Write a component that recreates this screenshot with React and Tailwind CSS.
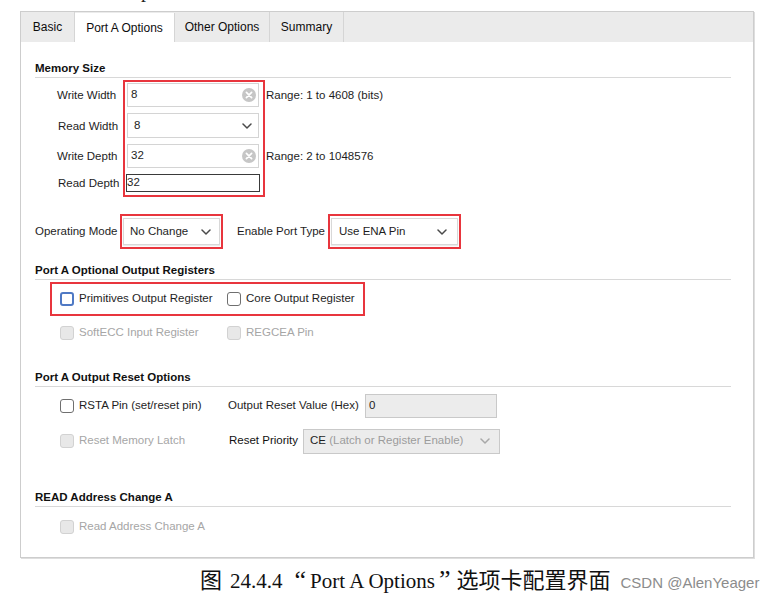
import React from 'react';

const CJK = "font-['Noto_Sans_CJK_SC',sans-serif]";
const SERIF = "font-['Liberation_Serif','Noto_Sans_CJK_SC',serif]";

function ClearIcon() {
    return (
        <svg width="14" height="14" viewBox="0 0 14 14">
            <circle cx="7" cy="7" r="7" fill="#c6c6c6" />
            <path d="M4.4 4.4l5.2 5.2M9.6 4.4l-5.2 5.2" stroke="#fff" strokeWidth="1.7" strokeLinecap="round" />
        </svg>
    );
}

function Chevron({ color = '#4a4a4a' }) {
    return (
        <svg width="10" height="6" viewBox="0 0 10 6">
            <path d="M1 1l4 4 4-4" fill="none" stroke={color} strokeWidth="1.5" strokeLinecap="round" strokeLinejoin="round" />
        </svg>
    );
}

function Checkbox({ variant = 'normal' }) {
    const styles = {
        normal: 'border border-[#6f6f6f] bg-white',
        focus: 'border-2 border-[#4f79c4] bg-white',
        disabled: 'border border-[#d2d2d2] bg-[#e8e8e8]',
    };
    return <span className={`inline-block w-[14px] h-[14px] rounded-[3px] shrink-0 ${styles[variant]}`} />;
}

function CheckItem({ label, variant = 'normal', width }) {
    const disabled = variant === 'disabled';
    return (
        <div className="flex items-center gap-[5px]" style={width ? { width } : undefined}>
            <Checkbox variant={variant} />
            <span className={disabled ? 'text-[#a6a6a6]' : 'text-[#1e1e1e]'}>{label}</span>
        </div>
    );
}

function SectionHeader({ children, className = '' }) {
    return (
        <div className={`h-[18px] border-b border-[#d8d8d8] font-bold text-[#111] leading-[16px] ${className}`}>
            {children}
        </div>
    );
}

function Tab({ label, active, width }) {
    return (
        <div
            className={`flex items-center justify-center border-r border-[#d5d5d5] text-[12px] text-[#0d0d0d] ${
                active ? 'h-[29px] bg-white' : 'h-full'
            }`}
            style={{ width }}
        >
            {label}
        </div>
    );
}

export default function App() {
    return (
        <div className="w-[778px] h-[598px] bg-white overflow-hidden font-['Liberation_Sans',Arial,sans-serif] text-[11.5px] text-[#1e1e1e]">
            {/* bottom edge of the previous paragraph, cut off by the crop */}
            <div className="h-[11px] overflow-hidden">
                <div className={`-mt-[22px] pl-[6px] text-[20px] leading-[22px] text-[#222] whitespace-nowrap ${SERIF}`}>
                    <span className={CJK}>我们将</span> Port A Options <span className={CJK}>选项卡配置如下图所示：</span>
                </div>
            </div>

            <div className="ml-[20px] w-[734px] h-[547px] border border-[#cdcdcd] shadow-[1px_1px_0_#dedede] flex flex-col">
                <div className="h-[30px] bg-[#ebebeb] flex items-end shrink-0">
                    <Tab label="Basic" width={54} />
                    <Tab label="Port A Options" width={100} active />
                    <Tab label="Other Options" width={95} />
                    <Tab label="Summary" width={74} />
                </div>

                <div className="pl-[14px] pr-[22px]">
                    <SectionHeader className="mt-[18px]">Memory Size</SectionHeader>

                    <div className="mt-[2px] flex">
                        <div className="w-[88px] pl-[22px] pt-[4px] flex flex-col gap-[6px]">
                            <div className="h-[24px] flex items-center">Write Width</div>
                            <div className="h-[25px] flex items-center pl-[1px]">Read Width</div>
                            <div className="h-[24px] flex items-center">Write Depth</div>
                            <div className="h-[18px] flex items-center pl-[1px]">Read Depth</div>
                        </div>

                        <div className="w-[142px] h-[117px] border-2 border-[#e8353d] pt-[1px] pl-[2px] flex flex-col gap-[6px]">
                            <div className="w-[132px] h-[24px] border border-[#d4d4d4] bg-white flex items-center justify-between pl-[3px] pr-[2px]">
                                <span>8</span>
                                <ClearIcon />
                            </div>
                            <div className="w-[132px] h-[25px] border border-[#d4d4d4] bg-white flex items-center justify-between pl-[6px] pr-[6px]">
                                <span>8</span>
                                <Chevron />
                            </div>
                            <div className="w-[132px] h-[24px] border border-[#d4d4d4] bg-white flex items-center justify-between pl-[3px] pr-[2px]">
                                <span>32</span>
                                <ClearIcon />
                            </div>
                            <div className="-ml-[1px] w-[134px] h-[18px] border border-[#3a3a3a] bg-white flex items-center">
                                <span>32</span>
                            </div>
                        </div>

                        <div className="pl-[1px] pt-[4px] flex flex-col gap-[6px]">
                            <div className="h-[24px] flex items-center">Range: 1 to 4608 (bits)</div>
                            <div className="h-[25px]" />
                            <div className="h-[24px] flex items-center">Range: 2 to 1048576</div>
                        </div>
                    </div>

                    <div className="mt-[17px] h-[35px] flex items-center">
                        <span className="w-[85px]">Operating Mode</span>
                        <div className="w-[103px] h-[35px] border-2 border-[#e8353d] p-[1px] pt-[2px]">
                            <div className="h-[27px] border border-[#d8d8d8] bg-white shadow-[0_1px_1px_rgba(0,0,0,0.08)] flex items-center justify-between pl-[6px] pr-[8px]">
                                <span>No Change</span>
                                <Chevron />
                            </div>
                        </div>
                        <span className="ml-[14px] w-[91px]">Enable Port Type</span>
                        <div className="w-[133px] h-[35px] border-2 border-[#e8353d] p-[1px] pt-[2px]">
                            <div className="h-[27px] border border-[#d8d8d8] bg-white shadow-[0_1px_1px_rgba(0,0,0,0.08)] flex items-center justify-between pl-[7px] pr-[10px]">
                                <span>Use ENA Pin</span>
                                <Chevron />
                            </div>
                        </div>
                    </div>

                    <SectionHeader className="mt-[13px]">Port A Optional Output Registers</SectionHeader>

                    <div className="mt-[2px] ml-[15px] w-[315px] h-[34px] border-2 border-[#e8353d] flex items-center pl-[8px]">
                        <CheckItem label="Primitives Output Register" variant="focus" width={167} />
                        <CheckItem label="Core Output Register" />
                    </div>

                    <div className="h-[34px] flex items-center pl-[25px]">
                        <CheckItem label="SoftECC Input Register" variant="disabled" width={167} />
                        <CheckItem label="REGCEA Pin" variant="disabled" />
                    </div>

                    <SectionHeader className="mt-[19px]">Port A Output Reset Options</SectionHeader>

                    <div className="mt-[5px] h-[28px] flex items-center pl-[25px]">
                        <CheckItem label="RSTA Pin (set/reset pin)" width={168} />
                        <span className="w-[137px]">Output Reset Value (Hex)</span>
                        <div className="w-[132px] h-[24px] border border-[#c9c9c9] bg-[#ececec] flex items-center pl-[3px]">
                            0
                        </div>
                    </div>

                    <div className="mt-[7px] h-[28px] flex items-center pl-[25px]">
                        <CheckItem label="Reset Memory Latch" variant="disabled" width={169} />
                        <span className="w-[74px] text-[#111]">Reset Priority</span>
                        <div className="w-[197px] h-[25px] border border-[#c9c9c9] bg-[#ececec] flex items-center justify-between pl-[6px] pr-[9px]">
                            <span>
                                <span className="text-[#1e1e1e]">CE</span>
                                <span className="text-[#9c9c9c]"> (Latch or Register Enable)</span>
                            </span>
                            <Chevron color="#a8a8a8" />
                        </div>
                    </div>

                    <SectionHeader className="mt-[34px]">READ Address Change A</SectionHeader>

                    <div className="mt-[6px] h-[28px] flex items-center pl-[25px]">
                        <CheckItem label="Read Address Change A" variant="disabled" />
                    </div>
                </div>
            </div>

            <div className="mt-[4px] pl-[200px] flex items-baseline whitespace-nowrap text-[#111]">
                <span className={`${CJK} text-[22px] leading-[26px]`}>图</span>
                <span className={`${SERIF} text-[21px] ml-[8px]`}>24.4.4</span>
                <span className={`${SERIF} text-[26px] leading-[26px] ml-[12px] mr-[4px]`}>“</span>
                <span className={`${SERIF} text-[21px]`}>Port A Options</span>
                <span className={`${SERIF} text-[26px] leading-[26px] ml-[4px]`}>”</span>
                <span className={`${CJK} text-[22px] ml-[6px]`}>选项卡配置界面</span>
                <span className="ml-[10px] text-[15px] text-[#8c8c8c]">CSDN @AlenYeager</span>
            </div>
        </div>
    );
}
